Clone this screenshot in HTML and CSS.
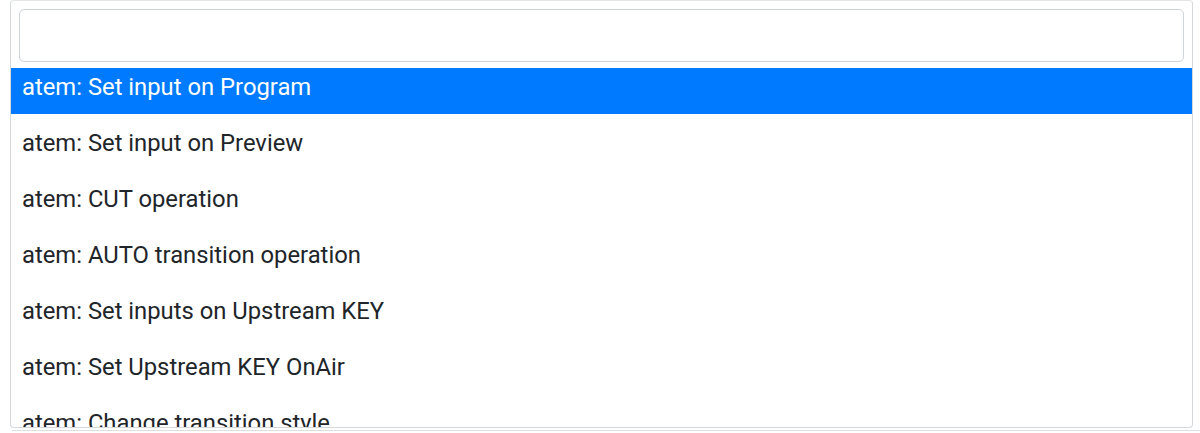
FILE: index.html
```html
<!DOCTYPE html>
<html lang="en">
<head>
    <meta charset="UTF-8">
    <title>Action picker</title>
    <link rel="stylesheet" href="styles.css">
</head>
<body>
    <div class="dropdown">
        <div class="search-box">
            <input type="text" class="search-field">
        </div>
        <div class="results">
            <ul class="options">
                <li class="option highlighted">atem: Set input on Program</li>
                <li class="option">atem: Set input on Preview</li>
                <li class="option">atem: CUT operation</li>
                <li class="option">atem: AUTO transition operation</li>
                <li class="option">atem: Set inputs on Upstream KEY</li>
                <li class="option">atem: Set Upstream KEY OnAir</li>
                <li class="option">atem: Change transition style</li>
            </ul>
        </div>
    </div>
    <div class="below"></div>
</body>
</html>
```

FILE: styles.css
```css
body {
    margin: 0;
    font-family: Roboto, 'Noto Sans', sans-serif;
    color: #212529;
    background: #fff;
}
.dropdown {
    margin-left: 10px;
    width: 1181px;
    border: 1px solid #d6d9dc;
    border-top-color: #e3e5e7;
    border-radius: 4px;
    background: #fff;
}
.search-box {
    padding: 8px 8px 6px;
}
.search-field {
    display: block;
    width: 100%;
    height: 53px;
    box-sizing: border-box;
    border: 1px solid #ced4da;
    border-radius: 5px;
    outline: none;
    font-size: 22px;
    padding: 0 12px;
}
.results {
    height: 359px;
    overflow: hidden;
}
.options {
    list-style: none;
    margin: -10px 0 0;
    padding: 0;
}
.option {
    height: 56px;
    box-sizing: border-box;
    padding: 3px 11px 0;
    line-height: 53px;
    font-size: 23.8px;
    white-space: nowrap;
}
.option.highlighted {
    background-color: #007bff;
    color: #fff;
}
.below {
    margin: 2px 0 0 12px;
    border-top: 1px solid #dee1e4;
}
```
